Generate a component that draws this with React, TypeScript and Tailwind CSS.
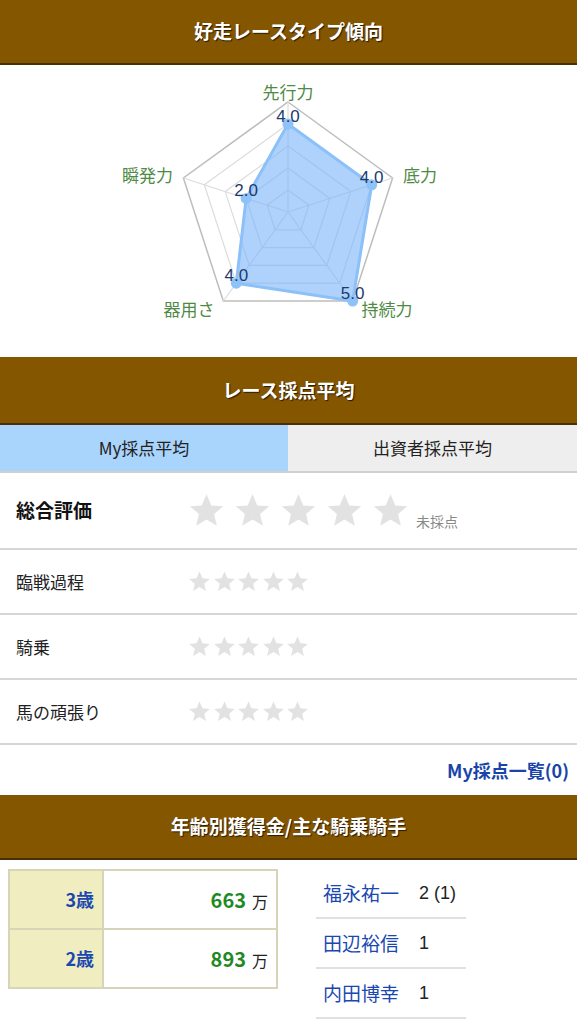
import React from 'react';

const FONT = { fontFamily: '"Noto Sans CJK JP", "Noto Sans", sans-serif' };

function SectionHeader({ title, className = '' }: { title: string; className?: string }) {
  return (
    <div
      className={`flex items-center justify-center bg-[#845600] border-b-2 border-[#4a2f05] ${className}`}
    >
      <span className="text-[19px] font-bold text-white [text-shadow:1px_1px_1px_rgba(0,0,0,0.7)]">
        {title}
      </span>
    </div>
  );
}

function Star({ size }: { size: number }) {
  return (
    <svg width={size} height={size} viewBox="0 0 24 24">
      <path
        d="M12 1.5l3.1 7.2 7.7.6-5.9 5 1.8 7.6L12 17.8l-6.7 4.1 1.8-7.6-5.9-5 7.7-.6z"
        fill="#e2e2e2"
      />
    </svg>
  );
}

// radar geometry, relative to the chart section
const CX = 288;
const CY = 147;
const R = 110;
const axes = [
  { label: '先行力', value: 4 },
  { label: '底力', value: 4 },
  { label: '持続力', value: 5 },
  { label: '器用さ', value: 4 },
  { label: '瞬発力', value: 2 },
];

function pt(i: number, r: number) {
  const a = (-90 + i * 72) * (Math.PI / 180);
  return [CX + r * Math.cos(a), CY + r * Math.sin(a)];
}

function ring(r: number) {
  return axes.map((_, i) => pt(i, r).map((n) => n.toFixed(1)).join(',')).join(' ');
}

function Radar() {
  const data = axes.map((a, i) => pt(i, (a.value / 5) * R));
  const labelPos = [
    { x: 288, y: 29, anchor: 'middle' },
    { x: 403, y: 112, anchor: 'start' },
    { x: 387, y: 246, anchor: 'middle' },
    { x: 189, y: 246, anchor: 'middle' },
    { x: 173, y: 112, anchor: 'end' },
  ];
  return (
    <svg width={577} height={292} className="block">
      {[1, 2, 3, 4].map((k) => (
        <polygon key={k} points={ring((R * k) / 5)} fill="none" stroke="#dcdcdc" strokeWidth={1.2} />
      ))}
      <polygon points={ring(R)} fill="none" stroke="#bdbdbd" strokeWidth={1.5} />
      {axes.map((_, i) => {
        const [x, y] = pt(i, R);
        return <line key={i} x1={CX} y1={CY} x2={x} y2={y} stroke="#dcdcdc" strokeWidth={1.2} />;
      })}
      <polygon
        points={data.map((p) => p.join(',')).join(' ')}
        fill="rgba(120,180,250,0.6)"
        stroke="#8cc0f8"
        strokeWidth={3}
        strokeLinejoin="round"
      />
      {data.map(([x, y], i) => (
        <circle key={i} cx={x} cy={y} r={5.5} fill="#8ec2f9" />
      ))}
      {data.map(([x, y], i) => (
        <text
          key={i}
          x={x}
          y={y - 2}
          textAnchor="middle"
          fontSize={17}
          fill="#1c3a6e"
          style={{ fontFamily: '"Liberation Sans", sans-serif' }}
        >
          {axes[i].value.toFixed(1)}
        </text>
      ))}
      {labelPos.map((l, i) => (
        <text
          key={i}
          x={l.x}
          y={l.y}
          textAnchor={l.anchor as 'start' | 'middle' | 'end'}
          fontSize={17}
          fill="#4f8a45"
          dominantBaseline="middle"
          style={FONT}
        >
          {axes[i].label}
        </text>
      ))}
    </svg>
  );
}

function ScoreRow({ label }: { label: string }) {
  return (
    <div className="flex h-[65px] items-center border-b-2 border-[#d6d6d6] pl-4">
      <span className="w-[172px] text-[17px] text-[#222]">{label}</span>
      <div className="flex gap-[1.5px]">
        {[0, 1, 2, 3, 4].map((i) => (
          <Star key={i} size={23} />
        ))}
      </div>
    </div>
  );
}

export default function App() {
  const jockeys = [
    { name: '福永祐一', count: '2 (1)' },
    { name: '田辺裕信', count: '1' },
    { name: '内田博幸', count: '1' },
  ];
  const earnings = [
    { age: '3歳', amount: '663' },
    { age: '2歳', amount: '893' },
  ];

  return (
    <div className="w-[577px] bg-white" style={FONT}>
      <SectionHeader title="好走レースタイプ傾向" className="h-[65px]" />
      <Radar />

      <SectionHeader title="レース採点平均" className="h-[68px]" />
      <div className="flex h-[48px] border-b-2 border-[#d0d0d0] text-[17px] text-[#222]">
        <div className="flex w-[288px] items-center justify-center bg-[#a9d4fc]">My採点平均</div>
        <div className="flex flex-1 items-center justify-center bg-[#eeeeee]">出資者採点平均</div>
      </div>

      <div className="flex h-[77px] items-center border-b-2 border-[#d6d6d6] pl-4">
        <span className="w-[172px] text-[19px] font-bold text-[#111]">総合評価</span>
        <div className="flex gap-[9px]">
          {[0, 1, 2, 3, 4].map((i) => (
            <Star key={i} size={37} />
          ))}
        </div>
        <span className="ml-[7px] mt-[22px] text-[14px] text-[#888]">未採点</span>
      </div>
      <ScoreRow label="臨戦過程" />
      <ScoreRow label="騎乗" />
      <ScoreRow label="馬の頑張り" />

      <div className="flex h-[50px] items-center justify-end pr-2">
        <span className="text-[18px] font-bold text-[#1a44a8]">My採点一覧(0)</span>
      </div>

      <SectionHeader title="年齢別獲得金/主な騎乗騎手" className="h-[65px]" />

      <div className="flex items-start pt-[9px] pl-2">
        <table className="w-[270px] border-collapse border-2 border-[#d8d4b8]">
          <tbody>
            {earnings.map((e) => (
              <tr key={e.age} className="h-[59px]">
                <td className="w-[94px] border-2 border-[#d8d4b8] bg-[#f0edc0] pr-[8px] text-right text-[18px] font-bold text-[#1a48b0]">
                  {e.age}
                </td>
                <td className="border-2 border-[#d8d4b8] pr-[8px] text-right">
                  <span className="text-[20px] font-bold text-[#1f8a25]">{e.amount}</span>
                  <span className="ml-[6px] text-[16px] text-[#222]">万</span>
                </td>
              </tr>
            ))}
          </tbody>
        </table>

        <div className="ml-[38px] w-[150px]">
          {jockeys.map((j) => (
            <div key={j.name} className="flex h-[50px] items-center border-b-2 border-[#e0e0e0] pl-[7px]">
              <span className="w-[96px] text-[19px] text-[#1a48b0]">{j.name}</span>
              <span className="text-[18px] text-[#222]" style={{ fontFamily: '"Liberation Sans", sans-serif' }}>
                {j.count}
              </span>
            </div>
          ))}
        </div>
      </div>
    </div>
  );
}
